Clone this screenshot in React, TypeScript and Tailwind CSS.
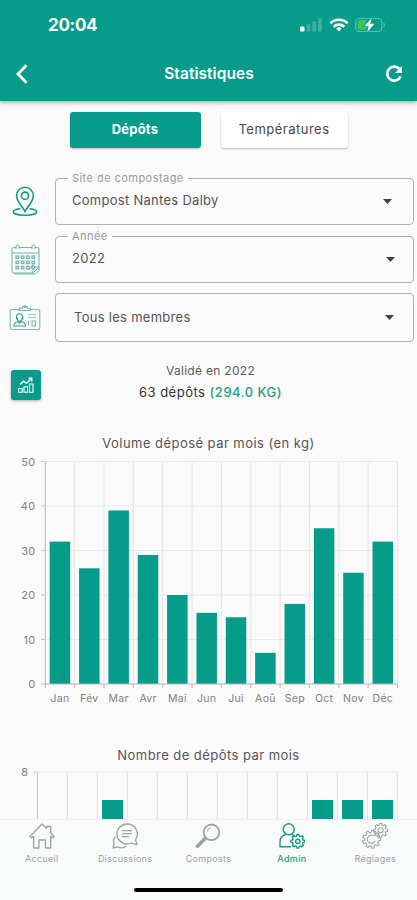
import React, { useState } from 'react';

interface SelectFieldProps {
  label?: string;
  value: string;
  icon: React.ReactNode;
  className: string;
  valueClass: string;
  arrowClass: string;
}

interface IconProps {
  className?: string;
}

const monthlyVolume = [
  { month: 'Jan', kg: 32 },
  { month: 'Fév', kg: 26 },
  { month: 'Mar', kg: 39 },
  { month: 'Avr', kg: 29 },
  { month: 'Mai', kg: 20 },
  { month: 'Jun', kg: 16 },
  { month: 'Jui', kg: 15 },
  { month: 'Aoû', kg: 7 },
  { month: 'Sep', kg: 18 },
  { month: 'Oct', kg: 35 },
  { month: 'Nov', kg: 25 },
  { month: 'Déc', kg: 32 },
];

// Months whose bars rise into the visible part of the second chart
const topMonths = [2, 9, 10, 11];

const gearPath = (cx: number, cy: number, r: number, teeth: number, depth: number) => {
  const step = (Math.PI * 2) / teeth;
  const points: string[] = [];
  for (let i = 0; i < teeth; i++) {
    [
      [-0.32, r - depth],
      [-0.18, r],
      [0.18, r],
      [0.32, r - depth],
    ].forEach(([offset, radius]) => {
      const a = (i + offset) * step;
      points.push(`${(cx + Math.cos(a) * radius).toFixed(2)} ${(cy + Math.sin(a) * radius).toFixed(2)}`);
    });
  }
  return `M${points.join('L')}Z`;
};

function PinIcon() {
  return (
    <svg className="h-[31px] w-[26px]" viewBox="0 0 26 31" fill="none" stroke="#12997f" strokeWidth="1.6">
      <path d="M13 25.5C11 20.8 4.6 15.8 4.6 9.7a8.4 8.4 0 0 1 16.800 0c0 6.100-6.400 11.100-8.400 15.800Z" />
      <circle cx="13" cy="9.700" r="3.600" />
      <path d="M8.300 22.800c-4 .5-7 1.700-7 3.100 0 1.900 5.200 3.300 11.700 3.300s11.700-1.400 11.700-3.300c0-1.400-3-2.600-7-3.100" />
    </svg>
  );
}

function CalendarIcon() {
  return (
    <svg className="h-[31px] w-[29px]" viewBox="0 0 29 31" fill="none" stroke="#6db5a6" strokeWidth="1">
      <path d="M5 3.500H2.500A1.500 1.500 0 0 0 1 5v22.500A1.500 1.500 0 0 0 2.500 29h19.500l6-6V5a1.500 1.500 0 0 0-1.500-1.500H24M8 3.500h13M1 9h27" />
      <path d="M3 29.200c1 .8 1 .8 3 .8h18.500l3.500-3.500V23M22 29c-.4-3 .2-5 1.500-5.500s2.500-.5 4.500-.5" />
      <path d="M5 5V2.500a1.500 1.500 0 0 1 3 0V5M21 5V2.500a1.500 1.500 0 0 1 3 0V5" />
      {[13, 18.2, 23.4].map((y) =>
        [5, 10.3, 15.6, 20.9].map((x) => (
          <rect key={`${x}-${y}`} x={x} y={y - 1} width="2.600" height="2.400" strokeWidth="1.200" />
        ))
      )}
      <path d="m17.500 26 6-7" />
    </svg>
  );
}

function BadgeIcon() {
  return (
    <svg className="h-[27px] w-[32px]" viewBox="0 0 32 27" fill="none" stroke="#79bbad" strokeWidth="1.100">
      <path d="M10.500 5.500H3A1.800 1.800 0 0 0 1.200 7.300v16.400A1.800 1.800 0 0 0 3 25.500h26a1.800 1.800 0 0 0 1.800-1.800V7.300A1.800 1.800 0 0 0 29 5.500h-7.500" />
      <path d="M10.500 6.500V4.200h3a2.500 2.500 0 0 1 5 0h3v2.300Z" />
      <circle cx="16" cy="2.800" r="1" />
      <path d="M7.500 15.500V13a3.200 3.200 0 0 1 6.400 0v2.500M8.500 13.500v1.600a2.200 2.200 0 0 0 4.400 0v-1.600M9 17.500c-2.800.7-4 1.700-4 4.500h11.500c0-2.800-1.200-3.800-4-4.500l-1.800 1.700Z" stroke="#3ca18d" />
      <path d="M19 10.500h8M19 13.500h8" strokeWidth=".8" />
      <path d="M19.500 17v5M23 17v5h3.500v-5Z" />
    </svg>
  );
}

function StatsIcon() {
  return (
    <svg className="h-4 w-4" viewBox="0 0 16 16" fill="none" stroke="white" strokeWidth="1.100">
      <path d="M.7 11.500h3.500v3.800H.7ZM6 9.800h3.500v5.500H6ZM11.500 7h3.500v8.300h-3.500Z" />
      <path d="m2 7.500 3.500-3.300 3 2L13.500 1.500M10.500 1.200h3.200v3.200" strokeWidth="1.400" />
    </svg>
  );
}

function HomeIcon({ className }: IconProps) {
  return (
    <svg className={className} viewBox="0 0 26 26" fill="none" stroke="currentColor" strokeWidth="1.300" strokeLinejoin="round">
      <path d="M1 13.500 13 1l4.500 4.500V3.500h4.200v6.200L25 13.500l-1.300 1.200-2-1.500V25h-5.200v-8h-6.500v8H4.600V13.200l-2.200 1.700Z" />
    </svg>
  );
}

function ChatIcon({ className }: IconProps) {
  return (
    <svg className={className} viewBox="0 0 26 26" fill="none" stroke="currentColor" strokeWidth="1.300" strokeLinejoin="round">
      <path d="M15 1a10 10 0 1 0 0 20c1.700 0 3-.3 4.500-1l5.500 1.700-1.500-5A10 10 0 0 0 15 1Z" />
      <path d="M3.400 13.500c-1.800 2-2.400 4.500-1.200 7L1 25l4.700-1.200c2.800 1.500 6.500 1 8.600-.7" />
      <path d="M10 7.700h10M10 10.700h10M10 13.700h7" />
    </svg>
  );
}

function MagnifierIcon({ className }: IconProps) {
  return (
    <svg className={className} viewBox="0 0 26 26" fill="none" stroke="currentColor" strokeWidth="1.800">
      <circle cx="16.500" cy="9.300" r="7.800" />
      <path d="M12.300 8.700a4.200 4.200 0 0 1 3.600-3.800" strokeWidth="1" />
      <path d="m10 15.500-7.500 7.700" strokeWidth="3.600" strokeLinecap="round" />
    </svg>
  );
}

function AdminIcon({ className }: IconProps) {
  return (
    <svg className={className} viewBox="0 0 26 26" fill="none" stroke="currentColor" strokeWidth="1.400" strokeLinejoin="round">
      <circle cx="9.700" cy="6.300" r="5.500" />
      <path d="M6.500 11.500C2.500 12.700 1 15.500 1 19v4.800h10.800M12.800 11.500c1.200.3 2 .8 2.700 1.500" />
      <path d={gearPath(18.8, 18.3, 6.9, 8, 1.5)} />
      <circle cx="18.800" cy="18.300" r="2.200" />
    </svg>
  );
}

function SettingsIcon({ className }: IconProps) {
  return (
    <svg className={className} viewBox="0 0 26 26" fill="none" stroke="currentColor" strokeWidth="1.100" strokeLinejoin="round">
      <path d={gearPath(9.5, 16.3, 9, 9, 2.1)} />
      <path d="M12.500 13.200a4.200 4.200 0 1 0 .8 4.800" />
      <path d={gearPath(18.7, 7.3, 7, 8, 1.7)} />
      <circle cx="18.700" cy="7.300" r="2.500" />
    </svg>
  );
}

function StatusBar() {
  return (
    <div className="flex h-[50px] items-center justify-between pl-[48px] pr-[31px] text-white">
      <span className="pt-[2px] text-[17px] font-bold tracking-[-0.300px]">20:04</span>
      <div className="flex items-center gap-[6px]">
        <svg className="h-[14px] w-[23px]" viewBox="0 0 23 14" fill="white">
          <rect x="0" y="8.500" width="4.500" height="5" rx="1.200" />
          <rect x="6.500" y="6" width="4" height="7.500" rx="1" opacity=".2" />
          <rect x="12.200" y="3.200" width="4" height="10.300" rx="1" opacity=".2" />
          <rect x="18" y="0" width="4" height="13.500" rx="1" opacity=".2" />
        </svg>
        <svg className="h-[14px] w-[20px]" viewBox="0 0 20 14" fill="none" stroke="white" strokeWidth="2.600">
          <path d="M1.300 5.200a12.600 12.600 0 0 1 17.400 0" />
          <path d="M4.700 8.700a7.700 7.700 0 0 1 10.600 0" />
          <path d="m10 13.500 2.800-2.900a4 4 0 0 0-5.600 0Z" fill="white" stroke="none" />
        </svg>
        <svg className="h-[16px] w-[31px]" viewBox="0 0 31 16">
          <rect x=".7" y="1.500" width="26" height="13" rx="3.500" fill="none" stroke="#5abcae" strokeWidth="1.100" />
          <path d="M28.500 5.500v5c2-.8 2-4.200 0-5Z" fill="#5abcae" />
          <path d="M4.500 3h7v10h-7A2 2 0 0 1 2.500 11V5a2 2 0 0 1 2-2Z" fill="#35c75a" />
          <path d="m16.800 1-7.300 8.200h4.200l-1.500 6 7.300-8.400h-4.300Z" fill="white" stroke="#079c8a" strokeWidth="1.500" paintOrder="stroke" />
        </svg>
      </div>
    </div>
  );
}

function SelectField({ label, value, icon, className, valueClass, arrowClass }: SelectFieldProps) {
  return (
    <div className={`flex items-center pr-[3.500px] ${className}`}>
      <div className="flex w-[55px] shrink-0 items-center pl-[9px]">
        <div className="flex w-[32px] justify-center">{icon}</div>
      </div>
      <button className="relative flex h-full flex-1 items-center justify-between rounded-[4px] border border-[#b0b0b0] text-left">
        {label && (
          <span className="absolute -top-[8px] left-[12px] bg-[#fafafa] px-[4px] text-[11px] leading-[14px] tracking-[0.450px] text-[#9b9b9b]">
            {label}
          </span>
        )}
        <span className={`text-[13px] tracking-[0.280px] text-[#555] ${valueClass}`}>{value}</span>
        <svg className={`h-[5px] w-[9px] ${arrowClass}`} viewBox="0 0 9 5" fill="#424242">
          <path d="M0 0h9L4.500 5Z" />
        </svg>
      </button>
    </div>
  );
}

function VolumeChart() {
  const left = 45.3;
  const step = 29.35;
  const top = 11.5;
  const unit = 4.45;
  const bottom = top + 50 * unit;

  return (
    <svg className="block h-[260px] w-[417px]" viewBox="0 0 417 260" fontFamily="Inter, sans-serif">
      {[0, 10, 20, 30, 40, 50].map((tick) => {
        const y = bottom - tick * unit;
        return (
          <g key={tick}>
            <path d={`M${left} ${y}H397.500`} stroke="#e9e9e9" />
            <path d={`M41 ${y}h4`} stroke="#c4c4c4" />
            <text x="35.500" y={y + 4} textAnchor="end" fontSize="11" letterSpacing=".3" fill="#808080">
              {tick}
            </text>
          </g>
        );
      })}
      {Array.from({ length: 13 }, (_, i) => (
        <path key={i} d={`M${left + i * step} ${top}V${bottom}`} stroke="#e6e6e6" />
      ))}
      {monthlyVolume.map(({ month, kg }, i) => (
        <g key={month}>
          <rect x={left + i * step + 4.4} y={bottom - kg * unit} width="20.500" height={kg * unit} fill="#059d8a" />
          <text x={left + (i + 0.5) * step} y={bottom + 18} textAnchor="middle" fontSize="10.500" letterSpacing=".3" fill="#808080">
            {month}
          </text>
        </g>
      ))}
      <path d={`M${left} ${top}V${bottom + 4}M${left} ${bottom}H397.500`} fill="none" stroke="#b9b9b9" />
      {Array.from({ length: 12 }, (_, i) => (
        <path key={i} d={`M${left + (i + 1) * step} ${bottom}v4`} stroke="#b9b9b9" />
      ))}
    </svg>
  );
}

function DepositsChart() {
  const left = 37.4;
  const step = 30;

  return (
    <svg className="block h-[54px] w-[417px]" viewBox="0 0 417 54" fontFamily="Inter, sans-serif">
      <text x="28" y="11" textAnchor="end" fontSize="11" fill="#808080">
        8
      </text>
      <path d={`M${left} 7H397.500`} stroke="#e9e9e9" />
      {Array.from({ length: 12 }, (_, i) => (
        <path key={i} d={`M${left + (i + 1) * step} 7V54`} stroke="#e0e0e0" />
      ))}
      <path d={`M33 7H${left}V54`} fill="none" stroke="#c4c4c4" />
      {topMonths.map((m) => (
        <rect key={m} x={left + m * step + 4.6} y="35" width="21" height="19" fill="#059d8a" />
      ))}
    </svg>
  );
}

const tabs = [
  { label: 'Accueil', Icon: HomeIcon },
  { label: 'Discussions', Icon: ChatIcon },
  { label: 'Composts', Icon: MagnifierIcon },
  { label: 'Admin', Icon: AdminIcon },
  { label: 'Réglages', Icon: SettingsIcon },
];

export default function App() {
  const [activeTab, setActiveTab] = useState('Admin');

  return (
    <div className="flex h-[900px] w-[417px] flex-col overflow-hidden bg-[#fafafa] font-['Inter',sans-serif]">
      <header className="z-10 h-[101px] shrink-0 bg-[#079c8a] shadow-[0_2px_4px_rgba(0,0,0,0.300)]">
        <StatusBar />
        <div className="flex h-[47px] items-center justify-between pl-[16px] pr-[14px] text-white">
          <svg className="h-[20px] w-[12px]" viewBox="0 0 12 20" fill="none" stroke="white" strokeWidth="2.800">
            <path d="m10.500 1.300-8.500 8.700 8.500 8.700" />
          </svg>
          <h1 className="pl-[5px] pt-px text-[15.500px] font-semibold tracking-[0.050px]">Statistiques</h1>
          <svg className="h-[18px] w-[18px]" viewBox="0 0 18 18" fill="none" stroke="white" strokeWidth="2.600">
            <path d="M14.600 4.200a7 7 0 1 0 1.100 7" />
            <path d="M17 1v7h-7Z" fill="white" stroke="none" />
          </svg>
        </div>
      </header>

      <main className="flex min-h-0 flex-1 flex-col">
        <div className="flex h-[47px] shrink-0 items-end justify-center gap-[20px]">
          <button className="h-[36px] w-[131px] rounded-[3px] bg-[#079c8a] text-[13px] font-bold tracking-[0.200px] text-white shadow-[0_1px_2px_rgba(0,0,0,0.250)]">
            Dépôts
          </button>
          <button className="h-[36px] w-[127px] rounded-[3px] bg-white text-[13px] tracking-[0.500px] text-[#484848] shadow-[0_1px_2px_rgba(0,0,0,0.250)]">
            Températures
          </button>
        </div>

        <div className="mt-[30px] flex shrink-0 flex-col">
          <SelectField
            label="Site de compostage"
            value="Compost Nantes Dalby"
            icon={<PinIcon />}
            className="h-[47px]"
            valueClass="pb-[2px] pl-[16px]"
            arrowClass="mr-[21px]"
          />
          <SelectField
            label="Année"
            value="2022"
            icon={<CalendarIcon />}
            className="mt-[11px] h-[47px]"
            valueClass="pb-[2px] pl-[16px]"
            arrowClass="mr-[18px]"
          />
          <SelectField
            value="Tous les membres"
            icon={<BadgeIcon />}
            className="mt-[10px] h-[49px]"
            valueClass="pl-[18px]"
            arrowClass="mr-[19px]"
          />
        </div>

        <div className="mt-[20px] flex h-[45px] shrink-0 items-center pl-[11px]">
          <button className="flex h-[30px] w-[30px] items-center justify-center rounded-[3px] bg-[#079c8a] shadow-[0_1px_3px_rgba(0,0,0,0.300)]">
            <StatsIcon />
          </button>
          <div className="flex flex-1 flex-col items-center pb-[5px] pr-[37px] text-center">
            <p className="text-[12px] leading-[20px] tracking-[0.300px] text-[#5c5c5c]">Validé en 2022</p>
            <p className="text-[13px] leading-[22px] tracking-[0.500px] text-[#333]">
              63 dépôts <span className="font-medium text-[#2a9d80]">(294.0 KG)</span>
            </p>
          </div>
        </div>

        <h2 className="mt-[26px] shrink-0 text-center text-[13px] leading-[20px] tracking-[0.450px] text-[#555]">
          Volume déposé par mois (en kg)
        </h2>
        <div className="-mt-[3px] shrink-0">
          <VolumeChart />
        </div>

        <h2 className="mt-[35px] shrink-0 text-center text-[13px] leading-[20px] tracking-[0.450px] text-[#555]">
          Nombre de dépôts par mois
        </h2>
        <div className="shrink-0">
          <DepositsChart />
        </div>
      </main>

      <footer className="flex h-[81px] shrink-0 flex-col items-center justify-between border-t border-[#f0f2f1] bg-[#f9fafa]">
        <nav className="grid w-full grid-cols-5 pt-[3px]">
          {tabs.map(({ label, Icon }) => (
            <button
              key={label}
              onClick={() => setActiveTab(label)}
              className={`flex flex-col items-center text-[9px] tracking-[0.300px] ${
                activeTab === label ? 'font-medium text-[#1a9c7f]' : 'text-[#9ba3a6]'
              }`}
            >
              <Icon className="h-[26px] w-[26px]" />
              <span className="mt-[3px] leading-[14px]">{label}</span>
            </button>
          ))}
        </nav>
        <div className="mb-[8px] h-[4px] w-[149px] rounded-full bg-black" />
      </footer>
    </div>
  );
}
